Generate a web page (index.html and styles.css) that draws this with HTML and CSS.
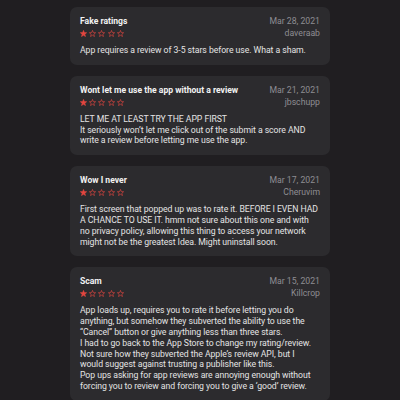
FILE: index.html
```html
<!DOCTYPE html>
<html>
<head>
<meta charset="utf-8">
<link rel="stylesheet" href="styles.css">
</head>
<body>
<svg width="0" height="0" class="defs">
  <defs>
    <path id="star" d="M5 0.6 L6.2 3.7 L9.5 3.9 L6.9 6 L7.8 9.3 L5 7.5 L2.2 9.3 L3.1 6 L0.5 3.9 L3.8 3.7 Z"/>
  </defs>
</svg>
<main class="list">
  <section class="card">
    <div class="head">
      <div class="left">
        <div class="title">Fake ratings</div>
        <div class="stars">
          <svg viewBox="0 0 10 10" class="star full"><use href="#star"/></svg>
          <svg viewBox="0 0 10 10" class="star"><use href="#star"/></svg>
          <svg viewBox="0 0 10 10" class="star"><use href="#star"/></svg>
          <svg viewBox="0 0 10 10" class="star"><use href="#star"/></svg>
          <svg viewBox="0 0 10 10" class="star"><use href="#star"/></svg>
        </div>
      </div>
      <div class="right">
        <div class="date">Mar 28, 2021</div>
        <div class="author">daveraab</div>
      </div>
    </div>
    <p class="body">App requires a review of 3-5 stars before use. What a sham.</p>
  </section>

  <section class="card">
    <div class="head">
      <div class="left">
        <div class="title">Wont let me use the app without a review</div>
        <div class="stars">
          <svg viewBox="0 0 10 10" class="star full"><use href="#star"/></svg>
          <svg viewBox="0 0 10 10" class="star"><use href="#star"/></svg>
          <svg viewBox="0 0 10 10" class="star"><use href="#star"/></svg>
          <svg viewBox="0 0 10 10" class="star"><use href="#star"/></svg>
          <svg viewBox="0 0 10 10" class="star"><use href="#star"/></svg>
        </div>
      </div>
      <div class="right">
        <div class="date">Mar 21, 2021</div>
        <div class="author">jbschupp</div>
      </div>
    </div>
    <p class="body">LET ME AT LEAST TRY THE APP FIRST<br>It seriously won’t let me click out of the submit a score AND write a review before letting me use the app.</p>
  </section>

  <section class="card">
    <div class="head">
      <div class="left">
        <div class="title">Wow I never</div>
        <div class="stars">
          <svg viewBox="0 0 10 10" class="star full"><use href="#star"/></svg>
          <svg viewBox="0 0 10 10" class="star"><use href="#star"/></svg>
          <svg viewBox="0 0 10 10" class="star"><use href="#star"/></svg>
          <svg viewBox="0 0 10 10" class="star"><use href="#star"/></svg>
          <svg viewBox="0 0 10 10" class="star"><use href="#star"/></svg>
        </div>
      </div>
      <div class="right">
        <div class="date">Mar 17, 2021</div>
        <div class="author">Cheruvim</div>
      </div>
    </div>
    <p class="body">First screen that popped up was to rate it. BEFORE I EVEN HAD A CHANCE TO USE IT. hmm not sure about this one and with no privacy policy, allowing this thing to access your network might not be the greatest Idea. Might uninstall soon.</p>
  </section>

  <section class="card">
    <div class="head">
      <div class="left">
        <div class="title">Scam</div>
        <div class="stars">
          <svg viewBox="0 0 10 10" class="star full"><use href="#star"/></svg>
          <svg viewBox="0 0 10 10" class="star"><use href="#star"/></svg>
          <svg viewBox="0 0 10 10" class="star"><use href="#star"/></svg>
          <svg viewBox="0 0 10 10" class="star"><use href="#star"/></svg>
          <svg viewBox="0 0 10 10" class="star"><use href="#star"/></svg>
        </div>
      </div>
      <div class="right">
        <div class="date">Mar 15, 2021</div>
        <div class="author">Killcrop</div>
      </div>
    </div>
    <p class="body">App loads up, requires you to rate it before letting you do anything, but somehow they subverted the ability to use the “Cancel” button or give anything less than three stars.<br>I had to go back to the App Store to change my rating/review.<br>Not sure how they subverted the Apple’s review API, but I<br>would suggest against trusting a publisher like this.<br>Pop ups asking for app reviews are annoying enough without forcing you to review and forcing you to give a ‘good’ review.</p>
  </section>
</main>
</body>
</html>
```

FILE: styles.css
```css
html, body {
  margin: 0;
  padding: 0;
  background: #201e21;
  height: 100%;
  overflow: hidden;
}
body {
  font-family: Roboto, "Liberation Sans", Arial, sans-serif;
  color: #e2e2e2;
}
.defs {
  position: absolute;
  width: 0;
  height: 0;
}
.list {
  width: 260px;
  margin: 0 auto;
  padding-top: 7px;
  display: flex;
  flex-direction: column;
  gap: 11px;
}
.card {
  background: #2c2b2e;
  border-radius: 7px;
  padding: 9px 10px 9px 10px;
}
.head {
  display: flex;
  justify-content: space-between;
  align-items: flex-start;
}
.title {
  font-size: 8.6px;
  font-weight: bold;
  line-height: 11px;
  color: #f2f2f2;
}
.stars {
  display: flex;
  gap: 2.2px;
  height: 9px;
  margin-top: 2px;
  align-items: center;
}
.star {
  width: 7px;
  height: 7px;
  fill: none;
  stroke: #e3463f;
  stroke-width: 0.9;
  stroke-linejoin: round;
}
.star.full {
  fill: #e3463f;
}
.right {
  text-align: right;
  color: #8e8d92;
  font-size: 8.7px;
}
.date {
  line-height: 11px;
}
.author {
  line-height: 10px;
  margin-top: 1px;
}
.body {
  margin: 7px 0 0 0;
  font-size: 8.7px;
  letter-spacing: -0.06px;
  line-height: 10.8px;
  color: #e4e4e4;
}
```
